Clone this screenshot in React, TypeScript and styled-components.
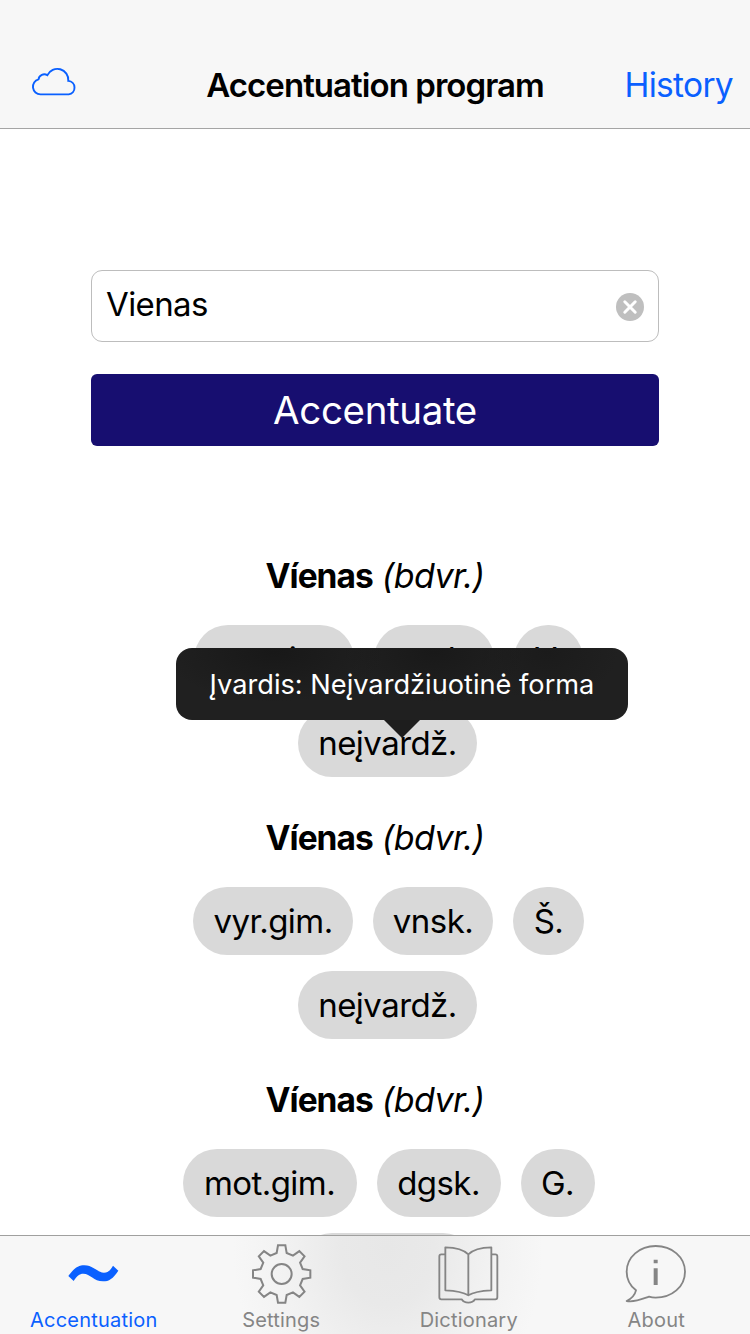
import React from 'react';
import styled, { createGlobalStyle } from 'styled-components';

const BLUE = '#0a60ff';
const GRAY = '#858585';

const GlobalStyle = createGlobalStyle`
  *, *::before, *::after { box-sizing: border-box; }
  body { margin: 0; background: #fff; }
`;

const Screen = styled.div`
  position: relative;
  display: flex;
  flex-direction: column;
  width: 750px;
  height: 1334px;
  overflow: hidden;
  background: #fff;
  color: #000;
  font-family: Inter, 'Liberation Sans', sans-serif;
  font-size: 33px;
`;

const NavBar = styled.header`
  flex: none;
  display: grid;
  grid-template-columns: 170px 1fr 170px;
  align-items: center;
  height: 129px;
  padding: 41px 17px 0 30px;
  background: #f7f7f7;
  border-bottom: 1px solid #a5a5a5;
`;

const CloudButton = styled.button`
  display: flex;
  width: 48px;
  height: 32px;
  margin-bottom: 8px;
  padding: 0;
  border: 0;
  background: none;
  color: ${BLUE};
`;

const NavTitle = styled.h1`
  margin: 0 0 0 -13px;
  font-size: 33px;
  font-weight: 600;
  line-height: 40px;
  letter-spacing: -0.95px;
  text-align: center;
  white-space: nowrap;
`;

const NavLink = styled.a`
  color: ${BLUE};
  font-size: 33.5px;
  line-height: 40px;
  letter-spacing: -0.7px;
  text-align: right;
`;

const Content = styled.main`
  flex: 1;
  min-height: 0;
  overflow: hidden;
  padding-top: 141px;
`;

const Form = styled.form`
  display: flex;
  flex-direction: column;
  gap: 32px;
  width: 568px;
  margin: 0 auto;
`;

const Field = styled.div`
  display: flex;
  align-items: center;
  justify-content: space-between;
  height: 72px;
  padding: 2px 14px 0 14px;
  border: 1px solid #bdbdbd;
  border-radius: 11px;
`;

const FieldText = styled.span`
  padding-bottom: 6px;
  font-size: 33px;
  letter-spacing: -0.6px;
`;

const Submit = styled.button`
  height: 72px;
  padding: 1px 0 0;
  border: 0;
  border-radius: 6px;
  background: #170e70;
  color: #fff;
  font-family: inherit;
  font-size: 38.5px;
  line-height: 71px;
  letter-spacing: -0.35px;
`;

const Results = styled.section`
  display: flex;
  flex-direction: column;
  gap: 40px;
  padding-top: 109px;
`;

const Entry = styled.article`
  display: flex;
  flex-direction: column;
  align-items: center;
  gap: 28px;
`;

const Word = styled.h2`
  margin: 0;
  font-size: 34px;
  font-weight: 400;
  line-height: 42px;
  letter-spacing: -0.5px;
`;

const Headword = styled.strong`
  font-size: 33.5px;
  font-weight: 700;
  letter-spacing: -1px;
`;

const ChipRows = styled.div`
  display: flex;
  flex-direction: column;
  align-items: center;
  gap: 16px;
  padding-left: 27px;
`;

const ChipRow = styled.div<{ $trailing?: number }>`
  position: relative;
  display: flex;
  gap: 20px;
  margin-right: ${(p) => p.$trailing ?? 0}px;
`;

const Chip = styled.span<{ $width: number }>`
  width: ${(p) => p.$width}px;
  height: 68px;
  border-radius: 34px;
  background: #d9d9d9;
  line-height: 68px;
  letter-spacing: -0.55px;
  text-align: center;
  white-space: nowrap;
`;

const Tooltip = styled.div`
  position: absolute;
  z-index: 2;
  left: -122px;
  bottom: 57px;
  width: 452px;
  height: 72px;
  border-radius: 16px;
  background:
    radial-gradient(110px 50px at 98px 4px, #181818, transparent),
    radial-gradient(90px 50px at 258px 4px, #191919, transparent),
    radial-gradient(70px 50px at 372px 4px, #1b1b1b, transparent),
    #202020;
  color: #fff;
  font-size: 27.2px;
  line-height: 73px;
  text-align: center;
  white-space: nowrap;
`;

const TooltipArrow = styled.div`
  position: absolute;
  z-index: 2;
  left: 86px;
  bottom: 39px;
  width: 36px;
  height: 18px;
  background: #1d1d1d;
  clip-path: polygon(0 0, 100% 0, 50% 100%);
`;

const TabBar = styled.nav`
  position: absolute;
  z-index: 3;
  left: 0;
  right: 0;
  bottom: 0;
  display: grid;
  grid-template-columns: repeat(4, 1fr);
  height: 99px;
  border-top: 1px solid #a0a09f;
  background: radial-gradient(155px 190px at 388px 12px, #e7e7e7 0%, #e9e9e9 30%, #f2f2f2 68%, #f7f7f7 100%);
`;

const Tab = styled.a<{ $active?: boolean }>`
  display: flex;
  flex-direction: column;
  align-items: center;
  padding-top: 8px;
  color: ${(p) => (p.$active ? BLUE : GRAY)};
  font-size: 20px;
  line-height: 24px;
  letter-spacing: 0.2px;

  svg { display: block; }
`;

const CloudIcon = () => (
  <svg width="48" height="32" viewBox="30 65 48 32" fill="none" stroke="currentColor" strokeWidth="1.9" strokeLinejoin="miter">
    <path d="M40.5 94.4A7.7 7.7 0 0 1 38.5 79.3A5.8 5.8 0 0 1 47.4 75.2A11 11 0 0 1 68.3 80.9A6.8 6.8 0 0 1 68.7 94.4Z" />
  </svg>
);

const ClearIcon = () => (
  <svg width="28" height="28" viewBox="-14 -14 28 28">
    <circle r="14" fill="#bfbfbf" />
    <path d="M-5.2 -5.2L5.2 5.2M5.2 -5.2L-5.2 5.2" stroke="#fff" strokeWidth="3" strokeLinecap="round" />
  </svg>
);

const TildeIcon = () => (
  <svg width="64" height="64" viewBox="185 72 192 192" fill="currentColor">
    <path d="M204 168C222 143 235 136 252 136C280 136 290 158 311 158C325 158 331 149 338 137L354 152C338 176 326 184 308 184C280 184 270 161 249 161C237 161 230 167 220 183Z" />
  </svg>
);

const toothProfile: [number, number][] = [[-15, -63], [-11, -86], [11, -86], [15, -63]];
const gearPoints = Array.from({ length: 8 }, (_, i) => {
  const a = (i * Math.PI) / 4;
  return toothProfile
    .map(([x, y]) => `${(x * Math.cos(a) - y * Math.sin(a)).toFixed(1)},${(x * Math.sin(a) + y * Math.cos(a)).toFixed(1)}`)
    .join(' ');
}).join(' ');

const GearIcon = () => (
  <svg width="64" height="64" viewBox="-98 -90 192 192" fill="none" stroke="currentColor" strokeWidth="6">
    <polygon points={gearPoints} />
    <circle r="30" />
  </svg>
);

const BookIcon = () => (
  <svg width="64" height="64" viewBox="110 72 192 192" fill="none" stroke="currentColor" strokeWidth="5.5" strokeLinejoin="round">
    <path d="M135 103H123Q117 103 117 109V232Q117 238 123 238H184Q190 248 204 248Q218 248 224 238H285Q291 238 291 232V109Q291 103 285 103H273" />
    <path d="M135 82Q184 83 204 103V226Q184 213 135 211ZM273 82Q224 83 204 103V226Q224 213 273 211Z" />
  </svg>
);

const InfoBubbleIcon = () => (
  <svg width="64" height="64" viewBox="673 72 192 192" fill="none" stroke="currentColor" strokeWidth="5.5" strokeLinejoin="round">
    <path d="M709 211C690 196 681 177 681 155C681 111 720 78 768 78C817 78 856 111 856 155C856 201 816 233 768 233C761 233 754 232 748 230C728 237 704 248 681 243C695 236 706 224 709 211Z" />
    <path d="M762 119H774V130H762ZM762 145H774V195H762Z" fill="currentColor" stroke="none" />
  </svg>
);

interface ChipData {
  label: string;
  width: number;
}

const lastChip: ChipData = { label: 'neįvardž.', width: 179 };

const entries: { chips: ChipData[]; tooltip?: string }[] = [
  {
    chips: [{ label: 'vyr.gim.', width: 160 }, { label: 'vnsk.', width: 120 }, { label: 'V.', width: 69 }],
    tooltip: 'Įvardis: Neįvardžiuotinė forma',
  },
  { chips: [{ label: 'vyr.gim.', width: 160 }, { label: 'vnsk.', width: 120 }, { label: 'Š.', width: 71 }] },
  { chips: [{ label: 'mot.gim.', width: 174 }, { label: 'dgsk.', width: 124 }, { label: 'G.', width: 74 }] },
];

export default function App() {
  return (
    <>
      <GlobalStyle />
      <Screen>
        <NavBar>
          <CloudButton aria-label="Cloud"><CloudIcon /></CloudButton>
          <NavTitle>Accentuation program</NavTitle>
          <NavLink>History</NavLink>
        </NavBar>
        <Content>
          <Form>
            <Field>
              <FieldText>Vienas</FieldText>
              <ClearIcon />
            </Field>
            <Submit type="button">Accentuate</Submit>
          </Form>
          <Results>
            {entries.map((entry, i) => (
              <Entry key={i}>
                <Word><Headword>Víenas</Headword> <em>(bdvr.)</em></Word>
                <ChipRows>
                  <ChipRow>
                    {entry.chips.map((c) => (
                      <Chip key={c.label} $width={c.width}>{c.label}</Chip>
                    ))}
                  </ChipRow>
                  <ChipRow $trailing={2}>
                    <Chip $width={lastChip.width}>{lastChip.label}</Chip>
                    {entry.tooltip && (
                      <>
                        <Tooltip>{entry.tooltip}</Tooltip>
                        <TooltipArrow />
                      </>
                    )}
                  </ChipRow>
                </ChipRows>
              </Entry>
            ))}
          </Results>
        </Content>
        <TabBar>
          <Tab $active><TildeIcon />Accentuation</Tab>
          <Tab><GearIcon />Settings</Tab>
          <Tab><BookIcon />Dictionary</Tab>
          <Tab><InfoBubbleIcon />About</Tab>
        </TabBar>
      </Screen>
    </>
  );
}
